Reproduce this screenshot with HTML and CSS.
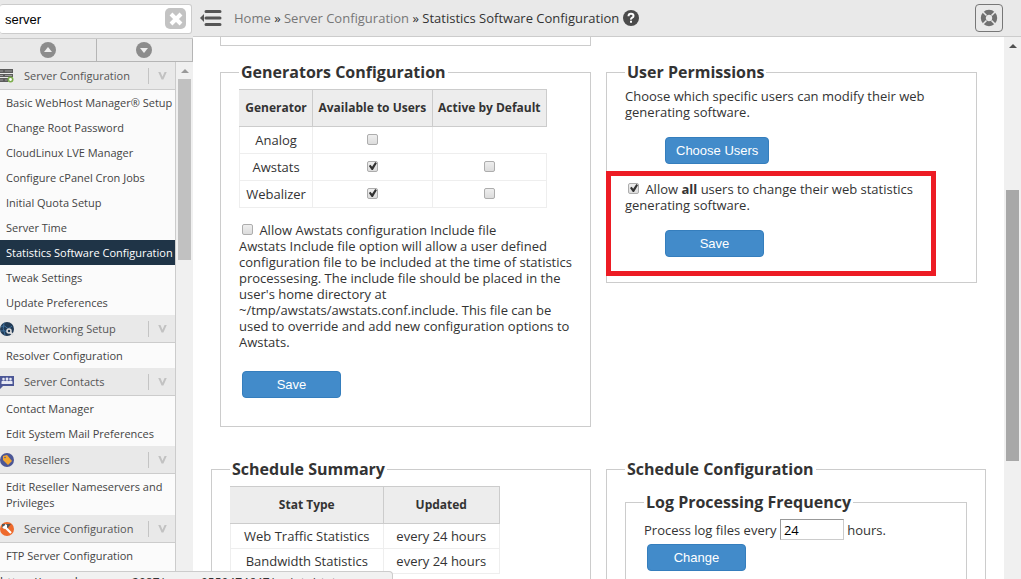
FILE: index.html
```html
<!doctype html>
<html lang="en">
<head>
  <title>Statistics Software Configuration</title>
  <meta charset="utf-8"/>
  <meta name="viewport" content="width=device-width, initial-scale=1"/>
  <link rel="stylesheet" href="styles.css">
</head>
<body>
  <div id="sidebar">
    <div class="search">
      <input type="text" value="server" aria-label="Search"/>
      <button type="button" class="clear" aria-label="Clear">
        <svg width="22" height="22" viewBox="0 0 22 22"><rect width="21" height="21" rx="5" fill="#c3c3c3"/><path d="M6 6l10 10M16 6L6 16" stroke="#fff" stroke-width="4"/></svg>
      </button>
    </div>
    <div class="jump">
      <button type="button" aria-label="Collapse all">
        <svg width="16" height="16" viewBox="0 0 16 16"><circle cx="8" cy="8" r="8" fill="#8c8c8c"/><path d="M4 10l4-5 4 5z" fill="#eee"/></svg>
      </button>
      <button type="button" aria-label="Expand all">
        <svg width="16" height="16" viewBox="0 0 16 16"><circle cx="8" cy="8" r="8" fill="#8c8c8c"/><path d="M4 6l4 5 4-5z" fill="#eee"/></svg>
      </button>
    </div>
    <div class="nav-wrap">
      <nav>
        <h3>
          <svg width="14" height="14" viewBox="0 0 14 14"><path d="M0 0h13v4H0zM0 5h13v3H0zM0 9h8v4H0z" fill="#5c5c5c"/><path d="M0 2h3M5 2h7M0 6.500h3M5 6.500h7M0 11h3M5 11h2" stroke="#999"/><circle cx="10.500" cy="10.500" r="2.200" fill="#fff" stroke="#7cae4b" stroke-width="1.600"/></svg>
          <span>Server Configuration</span><i></i>
        </h3>
        <a href="#">Basic WebHost Manager® Setup</a>
        <a href="#">Change Root Password</a>
        <a href="#">CloudLinux LVE Manager</a>
        <a href="#">Configure cPanel Cron Jobs</a>
        <a href="#">Initial Quota Setup</a>
        <a href="#">Server Time</a>
        <a href="#" class="active">Statistics Software Configuration</a>
        <a href="#">Tweak Settings</a>
        <a href="#">Update Preferences</a>
        <h3>
          <svg width="14" height="14" viewBox="0 0 14 14"><circle cx="7" cy="7" r="7" fill="#213a55"/><path d="M1 5q3-3 5 0t6-1M4 1q-2 5 1 12M1 9q4-1 6 1" fill="none" stroke="#3f709c"/><circle cx="9" cy="9" r="2" fill="none" stroke="#ddd" stroke-width="1.500"/><path d="M10 10l3 3" stroke="#ddd" stroke-width="2"/></svg>
          <span>Networking Setup</span><i></i>
        </h3>
        <a href="#">Resolver Configuration</a>
        <h3>
          <svg width="14" height="14" viewBox="0 0 14 14"><path d="M0 1h14v10H3l-3 3z" fill="#4c5796"/><g fill="#e6e8f4"><circle cx="3.500" cy="4" r="1.300"/><circle cx="7" cy="4" r="1.400"/><circle cx="10.500" cy="4" r="1.300"/><path d="M1.500 9V6.500q2-2 4 0V9zM5 9V6.500q2-2 4 0V9zM8.500 9V6.500q2-2 4 0V9z"/></g></svg>
          <span>Server Contacts</span><i></i>
        </h3>
        <a href="#">Contact Manager</a>
        <a href="#">Edit System Mail Preferences</a>
        <h3>
          <svg width="14" height="14" viewBox="0 0 14 14"><circle cx="7" cy="7" r="7" fill="#4c5796"/><path d="M3 3l4-1 5 6-4 4-5-5z" fill="#f3a62f"/><circle cx="5" cy="4.500" r=".8" fill="#4c5796"/></svg>
          <span>Resellers</span><i></i>
        </h3>
        <a href="#">Edit Reseller Nameservers and Privileges</a>
        <h3>
          <svg width="14" height="14" viewBox="0 0 14 14"><circle cx="7" cy="7" r="7" fill="#ee6a2c"/><path d="M2 2h9l-4 5-5-1z" fill="#555"/><path d="M4 4l7 7" stroke="#fff" stroke-width="2.200"/><path d="M2 5l2 2 3-1V3L5 2v2z" fill="#fff"/></svg>
          <span>Service Configuration</span><i></i>
        </h3>
        <a href="#">FTP Server Configuration</a>
      </nav>
      <div class="scroll scroll-nav"><span class="arrow"></span><span class="thumb"></span></div>
    </div>
  </div>

  <div id="main">
    <header>
      <button type="button" class="toggle" aria-label="Toggle menu">
        <svg width="22" height="16" viewBox="0 0 22 16"><path d="M0 8l4-4v8z" fill="#555"/><path d="M6 1.500h14M6 8h14M6 14.500h14" stroke="#555" stroke-width="3" stroke-linecap="round"/></svg>
      </button>
      <div class="crumbs">
        <a href="#">Home</a> » <a href="#">Server Configuration</a> » <span>Statistics Software Configuration</span>
      </div>
      <svg class="help" width="16" height="16" viewBox="0 0 16 16" role="img" aria-label="Help"><circle cx="8" cy="8" r="8" fill="#4b4b4b"/><path d="M5.500 6.200q0-2.400 2.500-2.400t2.500 2.100q0 1.100-1.300 1.800T8 9.600" fill="none" stroke="#fff" stroke-width="2"/><path d="M7 10.800h2v2H7z" fill="#fff"/></svg>
      <button type="button" class="support" aria-label="Support">
        <svg width="18" height="18" viewBox="0 0 18 18"><circle cx="9" cy="9" r="5.700" fill="none" stroke="#707070" stroke-width="5"/><path d="M3 3l3.500 3.500M15 3l-3.500 3.500M3 15l3.500-3.500M15 15l-3.500-3.500" stroke="#e9e9e9" stroke-width="1.500"/></svg>
      </button>
    </header>

    <div class="body">
      <div class="content">
        <div class="previous"></div>
        <div class="row">
          <fieldset class="generators">
            <legend>Generators Configuration</legend>
            <table>
              <thead>
                <tr><th>Generator</th><th>Available to Users</th><th>Active by Default</th></tr>
              </thead>
              <tbody>
                <tr>
                  <td>Analog</td>
                  <td><input type="checkbox" aria-label="Analog available"/></td>
                  <td class="none"></td>
                </tr>
                <tr>
                  <td>Awstats</td>
                  <td><input type="checkbox" aria-label="Awstats available" checked/></td>
                  <td><input type="checkbox" aria-label="Awstats active"/></td>
                </tr>
                <tr>
                  <td>Webalizer</td>
                  <td><input type="checkbox" aria-label="Webalizer available" checked/></td>
                  <td><input type="checkbox" aria-label="Webalizer active"/></td>
                </tr>
              </tbody>
            </table>
            <div class="include">
              <input type="checkbox" id="include"/>
              <label for="include">Allow Awstats configuration Include file</label>
              <p>Awstats Include file option will allow a user defined configuration file to be included at the time of statistics processesing. The include file should be placed in the user's home directory at ~/tmp/awstats/awstats.conf.include. This file can be used to override and add new configuration options to Awstats.</p>
            </div>
            <button type="button" class="btn">Save</button>
          </fieldset>

          <fieldset class="permissions">
            <legend>User Permissions</legend>
            <p>Choose which specific users can modify their web generating software.</p>
            <button type="button" class="btn">Choose Users</button>
            <div class="allow">
              <input type="checkbox" id="allow" checked/>
              <label for="allow">Allow <b>all</b> users to change their web statistics generating software.</label>
            </div>
            <button type="button" class="btn">Save</button>
            <div class="highlight"></div>
          </fieldset>
        </div>

        <div class="row schedule">
          <fieldset>
            <legend>Schedule Summary</legend>
            <table class="summary">
              <thead>
                <tr><th>Stat Type</th><th>Updated</th></tr>
              </thead>
              <tbody>
                <tr><td>Web Traffic Statistics</td><td>every 24 hours</td></tr>
                <tr><td>Bandwidth Statistics</td><td>every 24 hours</td></tr>
              </tbody>
            </table>
          </fieldset>
          <fieldset>
            <legend>Schedule Configuration</legend>
            <fieldset class="frequency">
              <legend>Log Processing Frequency</legend>
              <label for="hours">Process log files every</label>
              <input type="text" id="hours" value="24"/> hours.
              <div><button type="button" class="btn">Change</button></div>
            </fieldset>
          </fieldset>
        </div>
      </div>
      <div class="scroll scroll-main"><span class="arrow"></span><span class="thumb"></span></div>
    </div>
  </div>

  <div id="status">https://cpanelserver.co:2087/cpsess9559474647/scripts/statmanage</div>
</body>
</html>
```

FILE: styles.css
```css
* {
  box-sizing: border-box;
}
body {
  color: #333;
  display: flex;
  font: 13px/16px "Open Sans", sans-serif;
  height: 100vh;
  margin: 0;
  overflow: hidden;
}
a {
  text-decoration: none;
}
p {
  margin: 0;
}
svg {
  display: block;
  flex: none;
}
button {
  background: none;
  border: 0;
  cursor: pointer;
  padding: 0;
}

/* Sidebar */
#sidebar {
  background: #e9e9e9;
  display: flex;
  flex: none;
  flex-direction: column;
  width: 193px;
}
.search {
  align-items: center;
  background: #fff;
  border: 1px solid #ccc;
  border-left: 0;
  border-radius: 3px;
  display: flex;
  height: 30px;
  margin: 4px 1px 4px 0;
  padding: 0 4px 0 5px;
}
.search input {
  border: 0;
  color: #000;
  flex: 1;
  font: 13px "Liberation Sans", Arial, sans-serif;
  min-width: 0;
  outline: 0;
  padding: 0;
}
.jump {
  border-bottom: 1px solid #b5b5b5;
  border-top: 1px solid #c9c9c9;
  display: flex;
  height: 24px;
}
.jump button {
  align-items: center;
  border-right: 1px solid #b5b5b5;
  display: flex;
  flex: 1;
  justify-content: center;
}
.nav-wrap {
  display: flex;
  flex: 1;
  min-height: 0;
}
nav {
  background: #fbfbfb;
  border-right: 1px solid #ccc;
  flex: 1;
  overflow: hidden;
}
nav h3 {
  align-items: center;
  background: #e9e9e9;
  border-bottom: 1px solid #ccc;
  color: #555;
  display: flex;
  font-size: 11px;
  font-weight: normal;
  height: 28px;
  margin: 0;
}
nav h3 span {
  flex: 1;
  margin-left: 10px;
}
nav h3 i {
  border-left: 1px solid #c4c4c4;
  font-style: normal;
  height: 16px;
  padding: 4px 8px 0 9px;
}
nav h3 i:before {
  background: #c2c2c2;
  clip-path: polygon(0 0, 25% 0, 50% 65%, 75% 0, 100% 0, 60% 100%, 40% 100%);
  content: "";
  display: block;
  height: 8px;
  width: 9px;
}
nav a {
  color: #444;
  display: block;
  font-size: 11px;
  padding: 5px 0 4px 6px;
}
nav a.active {
  background: #1f3447;
  color: #fff;
}

/* Scrollbars */
.scroll {
  align-items: center;
  background: #f0f0f0;
  display: flex;
  flex: none;
  flex-direction: column;
  width: 17px;
}
.scroll .arrow {
  border: 4px solid transparent;
  border-bottom-color: #505050;
  border-top: 0;
  height: 4px;
  margin-top: 7px;
}
.scroll .thumb {
  background: #a8a8a8;
  width: 13px;
}
.scroll-nav .arrow {
  border-bottom-color: #999;
}
.scroll-nav .thumb {
  background: #c1c1c1;
  height: 35%;
  margin-top: 6px;
}
.scroll-main .thumb {
  height: 50%;
  margin-top: 142px;
}

/* Header */
#main {
  display: flex;
  flex: 1;
  flex-direction: column;
  min-width: 0;
}
header {
  align-items: center;
  background: #e9e9e9;
  border-bottom: 1px solid #ccc;
  display: flex;
  flex: none;
  height: 37px;
  padding: 0 18px 0 7px;
}
.crumbs {
  margin: 0 4px 0 12px;
}
.crumbs a {
  color: #777;
}
.support {
  border: 1px solid #777;
  border-radius: 4px;
  height: 28px;
  margin-left: auto;
  padding: 4px;
  width: 28px;
}

/* Content */
.body {
  display: flex;
  flex: 1;
  min-height: 0;
}
.content {
  flex: 1;
  min-width: 0;
  overflow: hidden;
  padding: 0 18px;
}
.previous {
  border: 1px solid #ccc;
  border-top: 0;
  height: 9px;
  margin: 0 calc(50% + 8px) 15px 9px;
}
.row {
  align-items: start;
  display: grid;
  gap: 15px;
  grid-template-columns: 1fr 1fr;
}
fieldset {
  border: 1px solid #ccc;
  margin: 0;
  min-width: 0;
  padding: 6px 18px 28px;
  position: relative;
}
legend {
  font-size: 16px;
  font-weight: bold;
  line-height: 22px;
  padding: 0 2px;
}
.generators {
  margin-left: 9px;
}
.permissions {
  margin-right: 9px;
  padding: 5px 18px 25px;
}
.schedule {
  margin-top: 31px;
}

table {
  border-collapse: collapse;
  width: 308px;
}
th,
td {
  border: 1px solid #eee;
  height: 27px;
  padding: 0 5px;
  text-align: center;
}
th {
  background: #ededed;
  border: 1px solid #ccc;
  border-left-color: #ededed;
  font-size: 12px;
  font-weight: bold;
  height: 37px;
}
th + th {
  border-left-color: #ccc;
}
td.none {
  border-right: 0;
}
.summary {
  width: 270px;
}
.summary td {
  height: 25px;
  padding: 0 12px;
}

input[type=checkbox] {
  appearance: none;
  background: linear-gradient(#eee, #dcdcdc);
  border: 1px solid #adadad;
  border-radius: 2px;
  height: 11px;
  margin: 0;
  position: relative;
  vertical-align: 0;
  width: 11px;
}
input[type=checkbox]:checked:before {
  background: #333;
  clip-path: polygon(0 50%, 20% 35%, 40% 60%, 80% 0, 100% 15%, 50% 100%, 35% 100%);
  content: "";
  height: 8px;
  left: 1px;
  position: absolute;
  top: 0;
  width: 8px;
}
.include {
  margin-top: 14px;
}
.allow {
  margin-top: 17px;
}
.include input,
.allow input {
  margin: 0 3px;
}

.btn {
  background: #428bca;
  border: 1px solid #357ebd;
  border-radius: 4px;
  color: #fff;
  font: 13px/16px "Liberation Sans", Arial, sans-serif;
  height: 27px;
  min-width: 99px;
  padding: 0 10px;
}
.generators .btn {
  display: block;
  margin: 21px 0 0 3px;
}
.permissions .btn {
  display: block;
  margin: 17px 0 0 40px;
}
.highlight {
  border: 5px solid #ed1c24;
  bottom: 6px;
  height: 105px;
  left: -1px;
  position: absolute;
  right: 40px;
}

.frequency {
  margin-top: 5px;
}
.frequency input {
  border: 1px solid #ccc;
  border-left-color: #999;
  border-top-color: #999;
  font: 13px "Open Sans", sans-serif;
  height: 21px;
  padding: 0 3px;
  width: 64px;
}
.frequency .btn {
  margin: 4px 0 0 3px;
}

#status {
  background: #f1f1f1;
  border: 1px solid #ccc;
  border-left: 0;
  border-radius: 0 4px 0 0;
  bottom: -12px;
  font-size: 12px;
  height: 20px;
  left: 0;
  line-height: 22px;
  overflow: hidden;
  position: fixed;
  white-space: nowrap;
  width: 393px;
}
```
